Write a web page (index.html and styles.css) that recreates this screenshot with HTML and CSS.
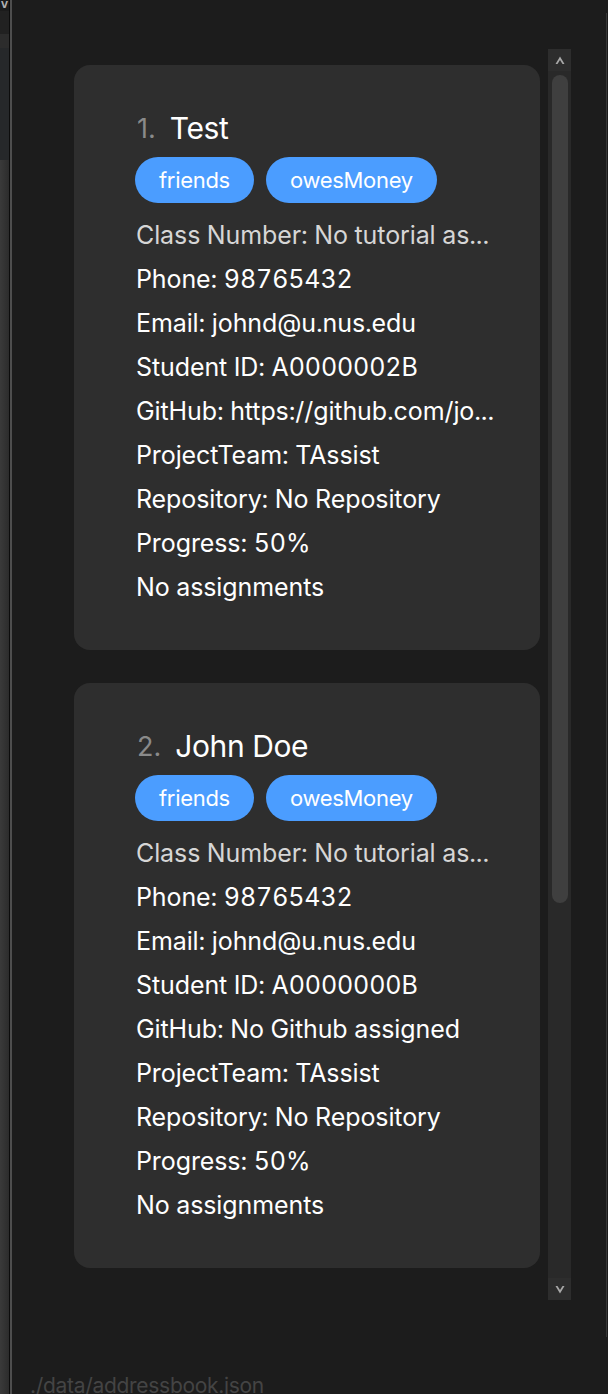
FILE: index.html
```html
<!DOCTYPE html>
<html>
<head>
<meta charset="utf-8">
<link rel="stylesheet" href="styles.css">
</head>
<body>
<div class="app">
  <div class="side">
    <div class="side-top"><span class="side-glyph">V</span></div>
    <div class="side-mid"></div>
    <div class="side-band"></div>
    <div class="side-dark"></div>
    <div class="side-low"></div>
  </div>
  <div class="sep-dark"></div>
  <div class="sep-light"></div>
  <div class="main">
    <div class="pane">
      <div class="list">
        <div class="card">
          <div class="title"><span class="idx">1.</span><span class="name">Test</span></div>
          <div class="tags"><span class="tag">friends</span><span class="tag">owesMoney</span></div>
          <div class="field dim">Class Number: No tutorial as...</div>
          <div class="field">Phone: 98765432</div>
          <div class="field">Email: johnd@u.nus.edu</div>
          <div class="field">Student ID: A0000002B</div>
          <div class="field">GitHub: https://github.com/jo...</div>
          <div class="field">ProjectTeam: TAssist</div>
          <div class="field">Repository: No Repository</div>
          <div class="field">Progress: 50%</div>
          <div class="field">No assignments</div>
        </div>
        <div class="card">
          <div class="title"><span class="idx">2.</span><span class="name">John Doe</span></div>
          <div class="tags"><span class="tag">friends</span><span class="tag">owesMoney</span></div>
          <div class="field dim">Class Number: No tutorial as...</div>
          <div class="field">Phone: 98765432</div>
          <div class="field">Email: johnd@u.nus.edu</div>
          <div class="field">Student ID: A0000000B</div>
          <div class="field">GitHub: No Github assigned</div>
          <div class="field">ProjectTeam: TAssist</div>
          <div class="field">Repository: No Repository</div>
          <div class="field">Progress: 50%</div>
          <div class="field">No assignments</div>
        </div>
      </div>
      <div class="scrollbar">
        <div class="sb-btn">
          <svg width="10" height="9" viewBox="0 0 10 9"><path d="M5 0.5 L9.5 8 L7.5 8 L5 4 L2.5 8 L0.5 8 Z" fill="#a8a8a8"/></svg>
        </div>
        <div class="sb-track"><div class="sb-thumb"></div></div>
        <div class="sb-btn">
          <svg width="10" height="9" viewBox="0 0 10 9"><path d="M5 8.5 L9.5 1 L7.5 1 L5 5 L2.5 1 L0.5 1 Z" fill="#a8a8a8"/></svg>
        </div>
      </div>
      <div class="pane-right"></div>
    </div>
    <div class="status">./data/addressbook.json</div>
  </div>
</div>
</body>
</html>
```
FILE: styles.css
```css
html, body {
  margin: 0;
  padding: 0;
  background: #1c1c1c;
  overflow: hidden;
}
.app {
  display: flex;
  width: 608px;
  height: 1394px;
  overflow: hidden;
  font-family: Inter, "Noto Sans", sans-serif;
}
.side {
  width: 9px;
  display: flex;
  flex-direction: column;
  overflow: hidden;
}
.side-top {
  height: 11px;
  background: #1b1b1b;
}
.side-glyph {
  display: block;
  font-family: "DejaVu Sans", sans-serif;
  font-weight: bold;
  font-size: 9px;
  line-height: 10px;
  color: #b0b0b0;
  margin-left: 1px;
}
.side-mid { height: 23px; background: #212121; }
.side-band { height: 14px; background: #2c2c2c; }
.side-dark { height: 112px; background: #26282a; }
.side-low { flex: 1; background: linear-gradient(90deg, #3a3a3a, #2c2c2c); }
.sep-dark { width: 1px; background: #0c0c0c; }
.sep-light { width: 2px; background: #4e4e4e; }
.main {
  flex: 1;
  display: flex;
  flex-direction: column;
  padding-top: 13px;
  min-height: 0;
  overflow: hidden;
}
.pane {
  height: 1324px;
  flex-shrink: 0;
  box-sizing: border-box;
  display: flex;
  padding-top: 36px;
  border-right: 1px solid #383838;
  margin-right: 1px;
}
.list {
  width: 466px;
  padding: 16px 8px 0 62px;
  display: flex;
  flex-direction: column;
  gap: 33px;
}
.card {
  background: #2e2e2e;
  border-radius: 16px;
  padding: 43px 30px 41px 62px;
  height: 585px;
  box-sizing: border-box;
  color: #fff;
}
.title {
  height: 40px;
  display: flex;
  align-items: center;
  gap: 14px;
}
.idx {
  font-size: 27px;
  color: #8a8a8a;
  padding-left: 1px;
}
.name {
  font-size: 30px;
  letter-spacing: -0.4px;
  color: #fff;
}
.tags {
  display: flex;
  gap: 12px;
  margin-top: 9px;
  margin-left: -1px;
  margin-bottom: 10px;
}
.tag {
  background: #4b9dff;
  color: #fff;
  border-radius: 23px;
  height: 46px;
  line-height: 46px;
  padding: 0 24px;
  font-size: 22px;
  letter-spacing: -0.3px;
}
.field {
  font-size: 25px;
  line-height: 44px;
  height: 44px;
  white-space: nowrap;
  overflow: hidden;
  letter-spacing: -0.1px;
  font-variant-numeric: tabular-nums;
}
.field.dim { color: #d6d6d6; }
.scrollbar {
  width: 23px;
  height: 1251px;
  display: flex;
  flex-direction: column;
  background: #292929;
}
.sb-btn {
  height: 22px;
  background: #2d2d2d;
  display: flex;
  align-items: center;
  justify-content: center;
}
.sb-track {
  flex: 1;
  padding: 4px 3px 0 4px;
}
.sb-thumb {
  height: 828px;
  background: #3f3f3f;
  border-radius: 8px;
}
.pane-right { flex: 1; }
.status {
  flex-shrink: 0;
  padding: 35px 0 0 18px;
  font-size: 21px;
  line-height: 28px;
  letter-spacing: -0.3px;
  color: #444444;
  white-space: nowrap;
}
```
